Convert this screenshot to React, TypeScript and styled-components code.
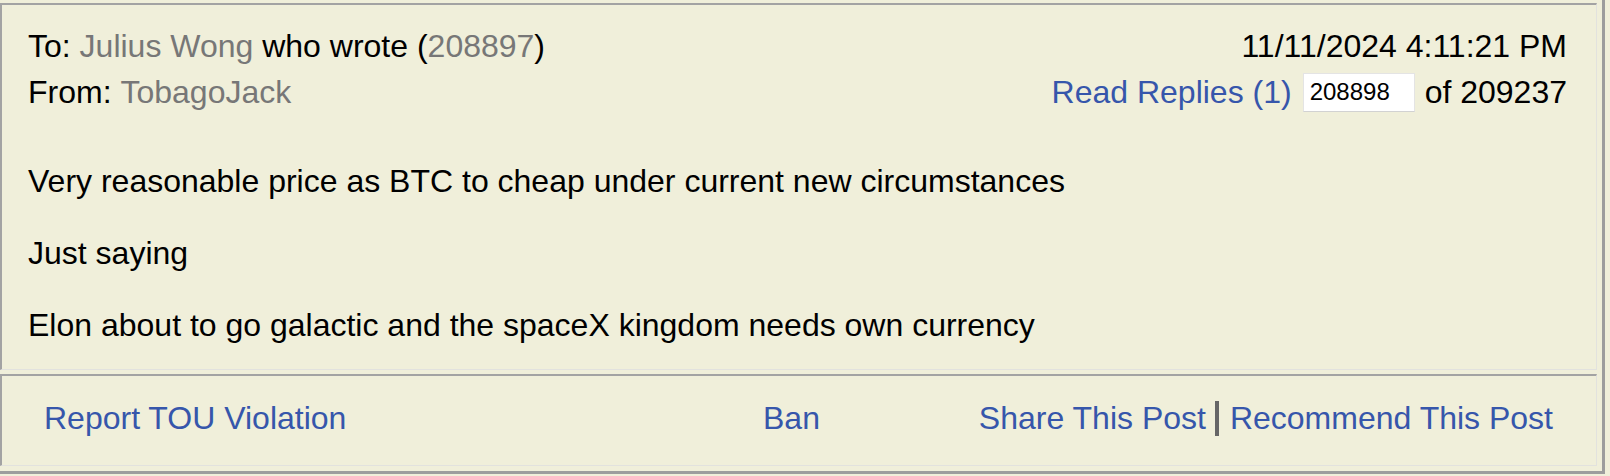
import React from 'react';
import styled, { createGlobalStyle } from 'styled-components';

const GlobalStyle = createGlobalStyle`
  html, body {
    margin: 0;
    padding: 0;
    background: #f0efda;
  }
  body {
    font-family: 'Liberation Sans', Arial, Helvetica, sans-serif;
    color: #000;
  }
`;

const Card = styled.div`
  width: 1597px;
  padding: 3px 5px 5px 0;
  display: flex;
  flex-direction: column;
  gap: 4px;
  border-right: 3px solid #9d9d9d;
  border-bottom: 3px solid #9d9d9d;
  background: #f0efda;
`;

const Cell = styled.div`
  border-top: 2px solid #a3a3a3;
  border-left: 2px solid #a3a3a3;
  border-right: 1px solid #e2e2de;
  border-bottom: 1px solid #e2e2de;
  font-size: 32px;
  line-height: 46px;
`;

const PostCell = styled(Cell)`
  padding: 18px 29px 21px 26px;
`;

const FooterCell = styled(Cell)`
  padding: 19px 43px 24px 42px;
  display: grid;
  grid-template-columns: 719px auto 1fr;
  align-items: center;
`;

const Header = styled.div`
  display: flex;
  justify-content: space-between;
`;

const Column = styled.div<{ $right?: boolean }>`
  display: flex;
  flex-direction: column;
  align-items: ${(p) => (p.$right ? 'flex-end' : 'flex-start')};
`;

const Line = styled.div`
  display: flex;
  align-items: center;
  height: 46px;
  white-space: pre;
`;

const Muted = styled.span`
  color: #777;
`;

const Link = styled.a`
  color: #3656ab;
  text-decoration: none;
  cursor: pointer;
  white-space: pre;
`;

const JumpInput = styled.input`
  box-sizing: border-box;
  width: 112px;
  height: 39px;
  margin: 0 10px 0 11px;
  padding: 0 6px;
  border: 1px solid #e4e4e4;
  border-bottom-color: #d2d2d2;
  background: #fff;
  font-family: 'Liberation Sans', Arial, sans-serif;
  font-size: 24px;
  color: #000;
  outline: none;
`;

const Body = styled.div`
  margin-top: 43px;
  p {
    margin: 0 0 26px;
  }
  p:last-child {
    margin-bottom: 0;
  }
`;

const RightLinks = styled.div`
  justify-self: end;
  display: flex;
  align-items: center;
`;

const Divider = styled.span`
  display: inline-block;
  width: 4px;
  height: 35px;
  margin: 0 11px 0 9px;
  background: #666;
`;

export default function App() {
  return (
    <>
      <GlobalStyle />
      <Card>
        <PostCell>
          <Header>
            <Column>
              <Line>
                To: <Muted>Julius Wong</Muted> who wrote (<Muted>208897</Muted>)
              </Line>
              <Line>
                From: <Muted>TobagoJack</Muted>
              </Line>
            </Column>
            <Column $right>
              <Line>11/11/2024 4:11:21 PM</Line>
              <Line>
                <Link>Read Replies (1)</Link>
                <JumpInput defaultValue="208898" />
                of 209237
              </Line>
            </Column>
          </Header>
          <Body>
            <p>Very reasonable price as BTC to cheap under current new circumstances</p>
            <p>Just saying</p>
            <p>Elon about to go galactic and the spaceX kingdom needs own currency</p>
          </Body>
        </PostCell>
        <FooterCell>
          <div>
            <Link>Report TOU Violation</Link>
          </div>
          <div>
            <Link>Ban</Link>
          </div>
          <RightLinks>
            <Link>Share This Post</Link>
            <Divider />
            <Link>Recommend This Post</Link>
          </RightLinks>
        </FooterCell>
      </Card>
    </>
  );
}
